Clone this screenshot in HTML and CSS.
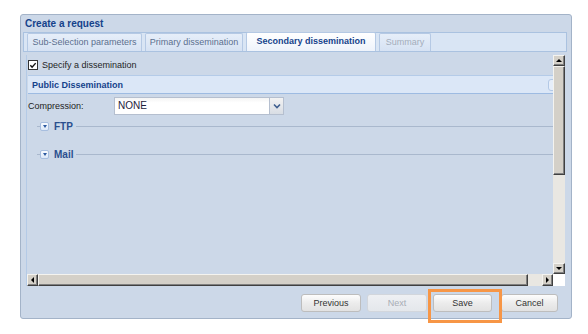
FILE: index.html
```html
<html>
<head>
<title>Create a request</title>
<link rel="stylesheet" href="styles.css">
</head>
<body>
<div class="page">
  <div class="window">
    <div class="winTitle">Create a request</div>
    <div class="tabStrip">
      <div class="tab tabSub">Sub-Selection parameters</div>
      <div class="tab tabPrimary">Primary dissemination</div>
      <div class="tab tabActive">Secondary dissemination</div>
      <div class="tab tabDisabled">Summary</div>
    </div>
    <div class="scrollBox">
      <div class="scrollContent">
        <div class="checkRow">
          <span class="checkBox">
            <svg width="9" height="9" viewBox="0 0 9 9"><path d="M1.5 4.2 L3.5 6.4 L7.5 1.8" fill="none" stroke="#111" stroke-width="1.6"/></svg>
          </span>
          <label>Specify a dissemination</label>
        </div>
        <div class="panel">
          <div class="panelHeader">
            <span>Public Dissemination</span>
            <span class="panelTool"></span>
          </div>
          <div class="panelBody">
            <div class="formRow">
              <label class="fieldLabel">Compression:</label>
              <div class="combo">
                <div class="comboText">NONE</div>
                <div class="comboTrigger">
                  <svg width="8" height="6" viewBox="0 0 8 6"><path d="M1 1.5 L4 4.5 L7 1.5" fill="none" stroke="#3f5f8f" stroke-width="1.6"/></svg>
                </div>
              </div>
            </div>
            <div class="fieldset">
              <span class="lineStub"></span>
              <span class="collapseBtn"><span class="tri"></span></span>
              <span class="legend">FTP</span>
              <span class="lineRest"></span>
            </div>
            <div class="fieldset">
              <span class="lineStub"></span>
              <span class="collapseBtn"><span class="tri"></span></span>
              <span class="legend">Mail</span>
              <span class="lineRest"></span>
            </div>
          </div>
        </div>
      </div>
      <div class="vScroll">
        <div class="sbBtn"><span class="arrUp"></span></div>
        <div class="sbThumb vThumb"></div>
        <div class="sbTrack"></div>
        <div class="sbBtn"><span class="arrDown"></span></div>
      </div>
      <div class="hScroll">
        <div class="sbBtn"><span class="arrLeft"></span></div>
        <div class="sbThumb hThumb"></div>
        <div class="sbTrack"></div>
        <div class="sbBtn"><span class="arrRight"></span></div>
      </div>
      <div class="sbCorner"></div>
    </div>
    <div class="footer">
      <button class="btn">Previous</button>
      <button class="btn btnDisabled">Next</button>
      <button class="btn btnSave">Save</button>
      <button class="btn btnCancel">Cancel</button>
    </div>
  </div>
  <div class="highlight"></div>
</div>
</body>
</html>
```

FILE: styles.css
```css
body {
    margin: 0;
    background-color: #ffffff;
    font-family: "Liberation Sans", Arial, sans-serif;
    font-size: 9px;
}

.page {
    position: relative;
    padding: 14px 0 0 20px;
    width: 568px;
    height: 320px;
}

.window {
    box-sizing: border-box;
    width: 552px;
    height: 305px;
    border: 1px solid #a3b3c8;
    border-radius: 3px;
    background-color: #ccd8e8;
    padding: 0 4px 0 2px;
    display: flex;
    flex-direction: column;
}

.winTitle {
    height: 17px;
    line-height: 17px;
    padding-left: 2px;
    font-size: 10px;
    font-weight: bold;
    color: #15428b;
}

/* tabs */
.tabStrip {
    box-sizing: border-box;
    height: 20px;
    border: 1px solid #aac2e0;
    background-color: #d9e5f4;
    padding: 1px 0 0 3px;
    display: flex;
    gap: 3px;
    align-items: flex-end;
}
.tab {
    box-sizing: border-box;
    height: 18px;
    line-height: 17px;
    border: 1px solid #b5c9e4;
    border-bottom: none;
    border-radius: 2px 2px 0 0;
    background: linear-gradient(#e6eef9, #d6e2f3);
    color: #5b6f8e;
    text-align: center;
}
.tabSub { width: 115px; }
.tabPrimary { width: 98px; }
.tabActive {
    width: 130px;
    height: 19px;
    background: linear-gradient(#ffffff, #eef3fb);
    color: #15428b;
    font-weight: bold;
}
.tabDisabled {
    width: 52px;
    color: #a3adbb;
}

/* scroll area */
.scrollBox {
    margin: 3px 2px 0 3px;
    height: 231px;
    display: grid;
    grid-template-columns: 1fr 12px;
    grid-template-rows: 1fr 12px;
    border-left: 1px solid #b4cae6;
}
.scrollContent {
    overflow: hidden;
    padding-left: 1px;
}

.checkRow {
    height: 20px;
    display: flex;
    align-items: center;
    gap: 4px;
    color: #1f1f1f;
}
.checkBox {
    box-sizing: border-box;
    width: 10px;
    height: 10px;
    border: 1px solid #333;
    background-color: #fff;
    display: flex;
}

.panel {
    width: calc(100% + 6px);
}
.panelHeader {
    box-sizing: border-box;
    height: 19px;
    border-top: 1px solid #b4cbe8;
    border-bottom: 1px solid #9dbbe2;
    background-color: #dbe7f7;
    padding: 0 0 0 4px;
    display: flex;
    align-items: center;
    justify-content: space-between;
    font-weight: bold;
    color: #15428b;
}
.panelTool {
    width: 9px;
    height: 10px;
    border: 1px solid #b3c9e6;
    border-radius: 3px;
    background-color: #e6eefa;
}

.formRow {
    margin-top: 3px;
    height: 18px;
    display: flex;
    align-items: center;
}
.fieldLabel {
    width: 86px;
    color: #222;
}
.combo {
    display: flex;
    height: 18px;
}
.comboText {
    box-sizing: border-box;
    width: 156px;
    height: 18px;
    line-height: 16px;
    border: 1px solid #b5bfcf;
    background: linear-gradient(#f4f4f4, #ffffff 30%);
    padding-left: 3px;
    font-size: 10px;
    color: #1c1c3c;
}
.comboTrigger {
    box-sizing: border-box;
    width: 14px;
    height: 18px;
    border: 1px solid #b5bfcf;
    border-left: none;
    background: linear-gradient(#f3f3f3, #d8dde4);
    display: flex;
    align-items: center;
    justify-content: center;
}

.fieldset {
    margin-top: 4px;
    height: 14px;
    padding-left: 9px;
    display: flex;
    align-items: center;
}
.fieldset + .fieldset {
    margin-top: 14px;
}
.lineStub, .lineRest {
    height: 1px;
    background-color: #a9b8cd;
}
.lineStub { width: 3px; }
.lineRest { flex: 1; margin-left: 3px; }
.collapseBtn {
    box-sizing: border-box;
    width: 9px;
    height: 9px;
    border: 1px solid #a7bedf;
    border-radius: 2px;
    background: linear-gradient(#f8fbff, #dce8f8);
    display: flex;
    align-items: center;
    justify-content: center;
}
.tri {
    width: 0;
    height: 0;
    border-left: 2.5px solid transparent;
    border-right: 2.5px solid transparent;
    border-top: 3px solid #2c5aa0;
}
.legend {
    margin-left: 5px;
    font-weight: bold;
    font-size: 10px;
    color: #2a4f8e;
}

/* classic scrollbars */
.vScroll {
    display: flex;
    flex-direction: column;
}
.hScroll {
    display: flex;
}
.sbBtn, .sbThumb {
    box-sizing: border-box;
    background-color: #d4d0c8;
    border-top: 1px solid #f4f3ef;
    border-left: 1px solid #f4f3ef;
    border-right: 1px solid #404040;
    border-bottom: 1px solid #404040;
    box-shadow: inset -1px -1px #808080;
}
.sbBtn {
    width: 12px;
    height: 12px;
    display: flex;
    align-items: center;
    justify-content: center;
    flex: none;
}
.vScroll .sbBtn { height: 11px; }
.hScroll .sbBtn { width: 11px; }
.vThumb { height: 109px; }
.hThumb { width: 490px; }
.sbTrack {
    flex: 1;
    background-color: #e9e7e2;
}
.sbCorner {
    background-color: #ffffff;
}
.arrUp, .arrDown, .arrLeft, .arrRight {
    width: 0;
    height: 0;
}
.arrUp {
    border-left: 3px solid transparent;
    border-right: 3px solid transparent;
    border-bottom: 3px solid #000;
}
.arrDown {
    border-left: 3px solid transparent;
    border-right: 3px solid transparent;
    border-top: 3px solid #000;
}
.arrLeft {
    border-top: 3px solid transparent;
    border-bottom: 3px solid transparent;
    border-right: 3px solid #000;
}
.arrRight {
    border-top: 3px solid transparent;
    border-bottom: 3px solid transparent;
    border-left: 3px solid #000;
}

/* footer buttons */
.footer {
    flex: 1;
    display: flex;
    justify-content: flex-end;
    align-items: flex-start;
    padding: 8px 9px 0 0;
    gap: 6px;
}
.btn {
    box-sizing: border-box;
    width: 60px;
    height: 18px;
    border: 1px solid #bdbdbd;
    border-radius: 3px;
    background: linear-gradient(#fdfdfd, #ececec 50%, #e2e2e2);
    font-family: "Liberation Sans", Arial, sans-serif;
    font-size: 9px;
    color: #333;
    padding: 0;
}
.btnDisabled {
    border-color: #d2d6dc;
    background: linear-gradient(#eef0f3, #e4e7eb);
    color: #a8adb5;
}
.btnSave { width: 59px; }
.btnCancel {
    width: 57px;
    margin-left: 3px;
}

.highlight {
    position: absolute;
    left: 428px;
    top: 289px;
    width: 74px;
    height: 34px;
    box-sizing: border-box;
    border: 3px solid #f79646;
}
```
